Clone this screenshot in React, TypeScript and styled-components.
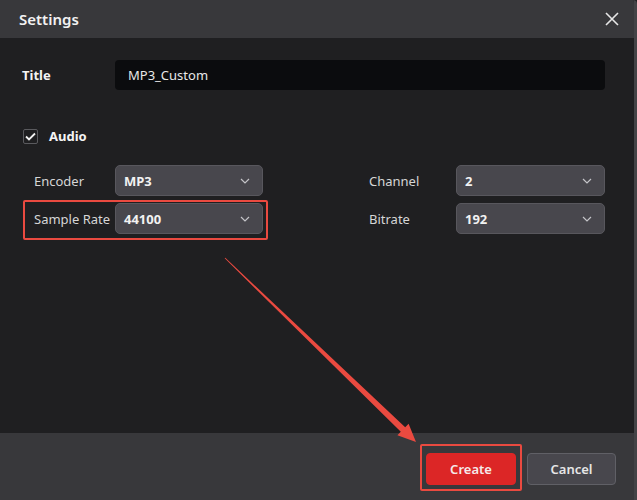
import React from "react";
import styled, { createGlobalStyle } from "styled-components";

const Global = createGlobalStyle`
  html, body { margin: 0; padding: 0; background: #1f1f21; }
  body { font-family: "Noto Sans", "Open Sans", sans-serif; }
  * { box-sizing: border-box; }
`;

const Window = styled.div`
  position: relative;
  width: 637px;
  height: 500px;
  display: flex;
  flex-direction: column;
  background: #1f1f21;
  border-right: 3px solid #434346;
  border-top-right-radius: 4px;
  overflow: hidden;
`;

const Header = styled.div`
  height: 38px;
  flex: none;
  display: flex;
  align-items: center;
  justify-content: space-between;
  padding: 0 12px 0 19px;
  background: #38383b;
`;

const HeaderTitle = styled.div`
  color: #f2f2f2;
  font-size: 15px;
  font-weight: 600;
`;

const CloseButton = styled.div`
  width: 20px;
  height: 20px;
  display: flex;
  align-items: center;
  justify-content: center;
`;

const Body = styled.div`
  flex: 1;
  padding: 22px 29px 0 22px;
  display: flex;
  flex-direction: column;
`;

const TitleRow = styled.div`
  display: flex;
  align-items: center;
  height: 30px;
`;

const TitleLabel = styled.div`
  width: 93px;
  color: #f4f4f4;
  font-size: 13px;
  font-weight: 700;
`;

const TitleInput = styled.div`
  flex: 1;
  height: 30px;
  background: #0b0c0e;
  border-radius: 4px;
  display: flex;
  align-items: center;
  padding-left: 13px;
  color: #e8e8e8;
  font-size: 13px;
`;

const AudioRow = styled.div`
  display: flex;
  align-items: center;
  margin-top: 37px;
  margin-left: 1px;
  gap: 11px;
`;

const Checkbox = styled.div`
  width: 15px;
  height: 15px;
  border: 1px solid #5a5a5e;
  border-radius: 2px;
  display: flex;
  align-items: center;
  justify-content: center;
`;

const SectionLabel = styled.div`
  color: #f4f4f4;
  font-size: 13px;
  font-weight: 700;
`;

const Grid = styled.div`
  margin-top: 20px;
  display: grid;
  grid-template-columns: 241px 342px;
  row-gap: 7px;
`;

const Field = styled.div<{ $labelWidth: number; $indent: number }>`
  position: relative;
  display: flex;
  align-items: center;
  height: 31px;
  padding-left: ${(p) => p.$indent}px;
  & > span:first-child {
    width: ${(p) => p.$labelWidth}px;
  }
`;

const FieldLabel = styled.span`
  color: #d6d6d6;
  font-size: 13px;
  white-space: nowrap;
`;

const Select = styled.div<{ $width: number }>`
  width: ${(p) => p.$width}px;
  flex: none;
  height: 31px;
  background: #48474d;
  border: 1px solid #58575d;
  border-radius: 5px;
  display: flex;
  align-items: center;
  justify-content: space-between;
  padding: 0 12px 0 8px;
  color: #f2f2f2;
  font-size: 13px;
  font-weight: 700;
`;

const Highlight = styled.div`
  position: absolute;
  border: 2px solid #ea4a40;
  border-radius: 2px;
  pointer-events: none;
`;

const Footer = styled.div`
  height: 67px;
  flex: none;
  background: #38383b;
  display: flex;
  justify-content: flex-end;
  align-items: flex-start;
  padding: 20px 18px 0 0;
  gap: 11px;
`;

const ButtonWrap = styled.div`
  position: relative;
`;

const Button = styled.div<{ $primary?: boolean }>`
  width: ${(p) => (p.$primary ? 90 : 89)}px;
  height: 32px;
  border-radius: 4px;
  display: flex;
  align-items: center;
  justify-content: center;
  font-size: 13px;
  font-weight: 600;
  color: ${(p) => (p.$primary ? "#f5eaea" : "#e6e6e6")};
  background: ${(p) => (p.$primary ? "#dc2626" : "#48474d")};
  border: 1px solid ${(p) => (p.$primary ? "#dc2626" : "#606066")};
`;

const Overlay = styled.svg`
  position: absolute;
  left: 0;
  top: 0;
  pointer-events: none;
`;

const Chevron = () => (
  <svg width="10" height="6" viewBox="0 0 10 6">
    <path d="M1 1 L5 5 L9 1" fill="none" stroke="#c4c4c8" strokeWidth="1.2" />
  </svg>
);

const fields = [
  { left: { label: "Encoder", value: "MP3", hl: false }, right: { label: "Channel", value: "2" } },
  { left: { label: "Sample Rate", value: "44100", hl: true }, right: { label: "Bitrate", value: "192" } },
];

export default function App() {
  return (
    <>
      <Global />
      <Window>
        <Header>
          <HeaderTitle>Settings</HeaderTitle>
          <CloseButton>
            <svg width="14" height="14" viewBox="0 0 14 14">
              <path d="M1 1 L13 13 M13 1 L1 13" stroke="#e6e6e6" strokeWidth="1.6" />
            </svg>
          </CloseButton>
        </Header>
        <Body>
          <TitleRow>
            <TitleLabel>Title</TitleLabel>
            <TitleInput>MP3_Custom</TitleInput>
          </TitleRow>
          <AudioRow>
            <Checkbox>
              <svg width="11" height="9" viewBox="0 0 11 9">
                <path d="M1 4.5 L4 7.5 L10 1.5" fill="none" stroke="#f2f2f2" strokeWidth="1.8" />
              </svg>
            </Checkbox>
            <SectionLabel>Audio</SectionLabel>
          </AudioRow>
          <Grid>
            {fields.map((row, i) => (
              <React.Fragment key={i}>
                <Field $labelWidth={81} $indent={12}>
                  <FieldLabel>{row.left.label}</FieldLabel>
                  <Select $width={148}>
                    {row.left.value}
                    <Chevron />
                  </Select>
                  {row.left.hl && (
                    <Highlight style={{ left: 1, top: -3, width: 245, height: 40 }} />
                  )}
                </Field>
                <Field $labelWidth={87} $indent={106}>
                  <FieldLabel>{row.right.label}</FieldLabel>
                  <Select $width={149}>
                    {row.right.value}
                    <Chevron />
                  </Select>
                </Field>
              </React.Fragment>
            ))}
          </Grid>
        </Body>
        <Footer>
          <ButtonWrap>
            <Button $primary>Create</Button>
            <Highlight style={{ left: -6, top: -9, width: 102, height: 47 }} />
          </ButtonWrap>
          <Button>Cancel</Button>
        </Footer>
        <Overlay width="637" height="500" viewBox="0 0 637 500">
          <polygon
            points="224.7,258.3 400.8,431.8 397.4,435.3 416,442 408.6,423.7 405.2,427.2 225.3,257.7"
            fill="#ea4a40"
          />
        </Overlay>
      </Window>
    </>
  );
}
